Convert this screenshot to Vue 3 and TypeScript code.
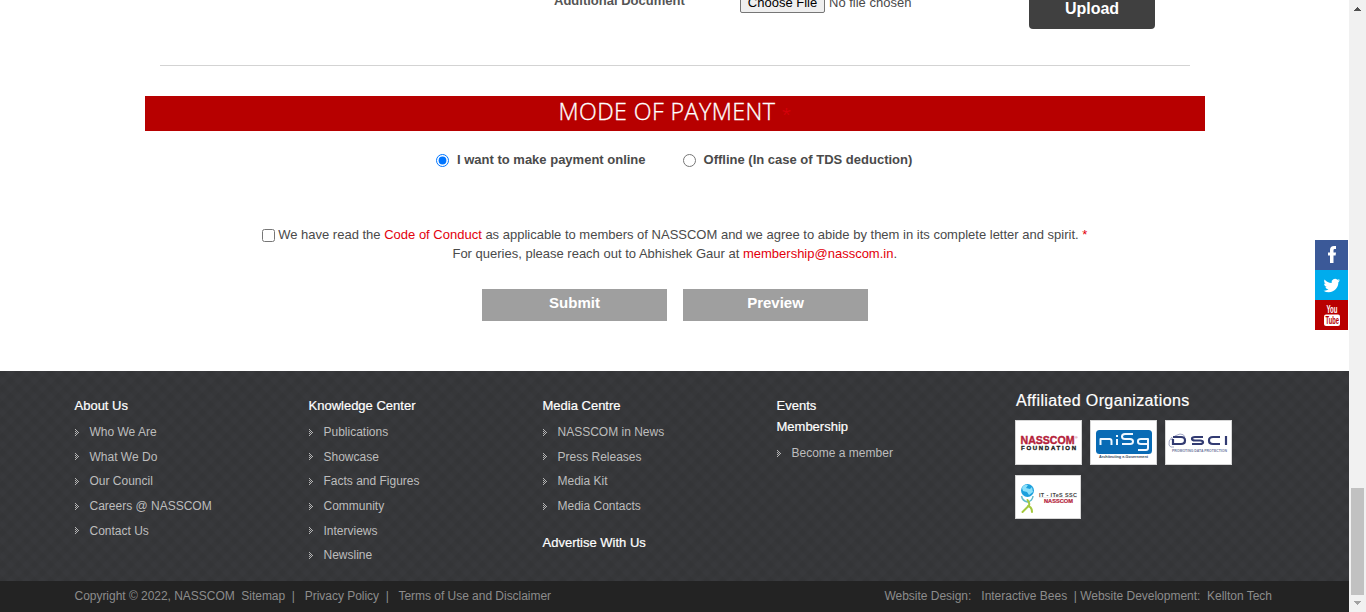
<script setup lang="ts">
import { ref } from 'vue'

interface LinkGroup { title: string; links: string[] }

const mode = ref<string>('online')
const agreed = ref<boolean>(false)

const columns: LinkGroup[][] = [
  [{ title: 'About Us', links: ['Who We Are', 'What We Do', 'Our Council', 'Careers @ NASSCOM', 'Contact Us'] }],
  [{ title: 'Knowledge Center', links: ['Publications', 'Showcase', 'Facts and Figures', 'Community', 'Interviews', 'Newsline'] }],
  [
    { title: 'Media Centre', links: ['NASSCOM in News', 'Press Releases', 'Media Kit', 'Media Contacts'] },
    { title: 'Advertise With Us', links: [] },
  ],
  [
    { title: 'Events', links: [] },
    { title: 'Membership', links: ['Become a member'] },
  ],
]
</script>

<template>
  <div class="window">
    <div class="page">
      <main>
        <div class="upload-row">
          <b class="doc-label">Additional Document</b>
          <div class="picker"><span class="choose">Choose File</span><span>No file chosen</span></div>
          <button class="upload">Upload</button>
        </div>
        <hr class="rule" />
        <h2 class="banner">MODE OF PAYMENT <span>*</span></h2>
        <div class="modes">
          <label><input v-model="mode" type="radio" value="online" /><span>I want to make payment online</span></label>
          <label><input v-model="mode" type="radio" value="offline" /><span>Offline (In case of TDS deduction)</span></label>
        </div>
        <div class="terms">
          <label class="agree">
            <input v-model="agreed" type="checkbox" />
            <span>We have read the <a>Code of Conduct</a> as applicable to members of NASSCOM and we agree to abide by them in its complete letter and spirit. <a>*</a></span>
          </label>
          <p>For queries, please reach out to Abhishek Gaur at <a>membership@nasscom.in</a>.</p>
        </div>
        <div class="actions"><button>Submit</button><button>Preview</button></div>
      </main>

      <footer>
        <div class="links">
          <div v-for="(col, i) in columns" :key="i" class="col">
            <section v-for="group in col" :key="group.title">
              <h4>{{ group.title }}</h4>
              <ul v-if="group.links.length">
                <li v-for="link in group.links" :key="link">
                  <svg width="5" height="7" viewBox="0 0 5 7" shape-rendering="crispEdges">
                    <path d="M0 0h1v1h-1zM1 1h1v1h-1zM0 2h1v1h-1zM2 2h1v1h-1zM1 3h1v1h-1zM3 3h1v1h-1zM0 4h1v1h-1zM2 4h1v1h-1zM1 5h1v1h-1zM0 6h1v1h-1z" fill="#b5b5b5" />
                  </svg>
                  <a>{{ link }}</a>
                </li>
              </ul>
            </section>
          </div>
          <div class="partners">
            <h3>Affiliated Organizations</h3>
            <div class="logos">
              <svg width="67" height="45" viewBox="0 0 67 45">
                <rect width="67" height="45" fill="#d6d6d6" /><rect x="1" y="1" width="65" height="43" fill="#fff" />
                <text x="5.5" y="24" class="bold" font-size="10.5" textLength="54" lengthAdjust="spacingAndGlyphs" fill="#b51f3b" stroke="#b51f3b" stroke-width=".4">NASSCOM</text>
                <text x="60" y="19" font-size="3.5" fill="#b51f3b">®</text>
                <text x="6" y="30" class="bold" font-size="6" textLength="55" fill="#222" stroke="#222" stroke-width=".35">FOUNDATION</text>
              </svg>
              <svg width="67" height="45" viewBox="0 0 67 45">
                <rect width="67" height="45" fill="#d6d6d6" /><rect x="1" y="1" width="65" height="43" fill="#fff" />
                <rect x="6" y="10" width="56" height="24" rx="3.5" fill="#086bb5" />
                <g fill="none" stroke="#eef7ff" stroke-width="2" stroke-linejoin="round">
                  <path d="M10.500 25v-6h9q2 0 2 2v4M27 19v6M27 15v2M43 14h-8q-3 0-3 2.500t3 2.500h5q3 0 3 2.500t-3 2.500h-8M58 19h-7q-3 0-3 2v1q0 2 3 2h7v-5v9q0 2-2 2h-8" />
                </g>
                <text x="9" y="38" class="bold" font-size="4" textLength="49" lengthAdjust="spacingAndGlyphs" fill="#34495e">Architecting e-Government</text>
              </svg>
              <svg width="67" height="45" viewBox="0 0 67 45">
                <rect width="67" height="45" fill="#d6d6d6" /><rect x="1" y="1" width="65" height="43" fill="#fff" />
                <g fill="none" stroke="#8a91b5" stroke-width=".8"><path d="M6 20q3-5 9-6 4 0 5 3M7 17q-4 4-3 8 1 3 5 2" /></g>
                <g fill="none" stroke="#323b72" stroke-width="2.2">
                  <path d="M8 17h8q4 0 4 3.500t-4 3.500H8v-5M38 17h-8q-3 0-3 1.700t3 1.800h5q3 0 3 1.700t-3 1.800h-8M55 17h-7q-4 0-4 3.500t4 3.500h7M61 16v9" />
                </g>
                <text x="7" y="31.5" class="bold" font-size="3" textLength="55" lengthAdjust="spacingAndGlyphs" fill="#70789e">PROMOTING DATA PROTECTION</text>
              </svg>
              <svg width="67" height="45" viewBox="0 0 67 45">
                <rect width="66" height="44" fill="#d6d6d6" /><rect x="1" y="1" width="64" height="42" fill="#fff" />
                <circle cx="12.5" cy="15.500" r="6.500" fill="#1ba0dd" />
                <path d="M7 13q2-4 6-3l-2 3 4 1 2-2 1 5-4 3-2-3-4-1z" fill="#8be0fa" />
                <path d="M6.500 21q1 5 6 6 5-1 5.500-6" fill="none" stroke="#63bccb" stroke-width="1.500" />
                <path d="M12.500 25q3 4 1 6t-6 6M13 31q4 1 4 6" fill="none" stroke="#a4c83d" stroke-width="2" stroke-linecap="round" />
                <path d="M24 22.500h38" stroke="#ddd" stroke-width=".5" />
                <text x="24" y="21.500" class="bold" font-size="5.500" textLength="38" fill="#444">IT - ITeS SSC</text>
                <text x="29" y="27.500" class="bold" font-size="5.200" textLength="29" lengthAdjust="spacingAndGlyphs" fill="#b51f3b" stroke="#b51f3b" stroke-width=".2">NASSCOM</text>
              </svg>
            </div>
          </div>
        </div>
        <div class="legal">
          <span>Copyright © 2022, NASSCOM&nbsp; Sitemap&nbsp; |&nbsp;&nbsp; Privacy Policy&nbsp; |&nbsp;&nbsp; Terms of Use and Disclaimer</span>
          <span class="credits">Website Design:&nbsp;&nbsp; Interactive Bees&nbsp; | Website Development:&nbsp; Kellton Tech</span>
        </div>
      </footer>
    </div>

    <div class="social">
      <svg width="33" height="30" viewBox="0 0 33 30"><rect width="33" height="30" fill="#3b5998" /><path d="M15 23v-7.500H13v-3h2v-2.500q0-4 4-4h2v3h-1.300q-1.200 0-1.200 1.300v2.200h2.500l-.4 3h-2.100v7.500z" fill="#fff" /></svg>
      <svg width="33" height="30" viewBox="0 0 33 30"><rect width="33" height="30" fill="#00aced" /><path transform="translate(8.500 7.200) scale(.69)" fill="#fff" d="M23.950 4.570a10 10 0 0 1-2.820.77 4.960 4.960 0 0 0 2.160-2.720c-.95.550-2.010.960-3.130 1.180a4.920 4.920 0 0 0-8.380 4.480C7.690 8.090 4.070 6.130 1.640 3.160a4.820 4.820 0 0 0-.67 2.480c0 1.710.87 3.210 2.190 4.100a4.900 4.900 0 0 1-2.230-.62v.06a4.920 4.920 0 0 0 3.950 4.830 5 5 0 0 1-2.210.08 4.940 4.940 0 0 0 4.600 3.420A9.870 9.870 0 0 1 0 19.540a13.990 13.990 0 0 0 7.550 2.210c9.050 0 14-7.500 14-13.980 0-.21 0-.42-.02-.63a9.940 9.940 0 0 0 2.420-2.570z" /></svg>
      <svg width="33" height="30" viewBox="0 0 33 30"><rect width="33" height="30" fill="#b90000" />
        <text x="11.500" y="13" class="bold" font-size="10.500" textLength="11" lengthAdjust="spacingAndGlyphs" fill="#fff">You</text>
        <rect x="9" y="14.500" width="16" height="11.500" rx="2" fill="#fff" />
        <text x="10.500" y="24" class="bold" font-size="10.500" textLength="13.500" lengthAdjust="spacingAndGlyphs" fill="#b90000">Tube</text>
      </svg>
    </div>

    <div class="scrollbar">
      <svg width="17" height="17" shape-rendering="crispEdges"><path d="M8 7h1v1h1v1h1v1h1v1H5v-1h1V9h1V8h1z" fill="#505050" /></svg>
      <i class="thumb"></i>
      <svg width="17" height="17" shape-rendering="crispEdges"><path d="M5 6h7v1h-1v1h-1v1H9v1H8V9H7V8H6V7H5z" fill="#a3a3a3" /></svg>
    </div>
  </div>
</template>

<style>
body { overflow: hidden; background: #fff; }
</style>

<style scoped>
* { box-sizing: border-box; }
.window { display: flex; height: 612px; overflow: hidden; position: relative; font: 13px/19px "Liberation Sans", Arial, sans-serif; color: #4a4a4a; }
.page { width: 1349px; flex: none; }
main { height: 371px; padding: 0 144px 0 145px; overflow: hidden; }
a { color: #e3000b; }
h2, h3, h4, p, ul { margin: 0; padding: 0; font-weight: normal; }
button { border: 0; padding: 0; font: bold 15px/18px "Liberation Sans", Arial, sans-serif; color: #fff; }

.upload-row { display: flex; height: 65px; padding-left: 409px; align-items: flex-start; }
.doc-label { width: 186px; margin-top: -9px; color: #555; }
.picker { width: 289px; display: flex; gap: 4px; margin-top: -8px; line-height: 21px; }
.choose { width: 85px; height: 21px; border: 1px solid #767676; border-radius: 2px; background: #efefef; color: #000; text-align: center; font-size: 13px; line-height: 20px; }
.upload { width: 126px; height: 39px; margin-top: -10px; border-radius: 4px; background: #404040; font-size: 16px; padding-bottom: 2px; }
.rule { margin: 0 15px 30px; border: 0; height: 1px; background: #d3d3d3; }
.banner { width: 1060px; height: 35px; background: #b70000; color: #fff; text-align: center; font: 300 23.3px/30px "Open Sans", sans-serif; letter-spacing: .4px; -webkit-text-stroke: .3px #fff; }
.banner span { color: #d9000c; font-size: 17px; line-height: 20px; -webkit-text-stroke: .2px #d9000c; }
.modes { display: flex; margin: 19px 0 0 291px; gap: 37px; font-weight: bold; }
.modes label { display: flex; }
.modes input { margin: 4px 8px 0 0; width: 13px; height: 13px; }
.terms { width: 1059.5px; margin-top: 56px; text-align: center; }
.agree { display: flex; justify-content: center; }
.agree input { margin: 4px 3px 0 0; width: 13px; height: 13px; }
.actions { display: flex; gap: 16px; margin: 26px 0 0 337px; }
.actions button { width: 185px; height: 32px; background: #9f9f9f; padding-bottom: 4px; }

footer {
  height: 241px;
  background-color: #38393c;
  background-image:
    repeating-linear-gradient(45deg, rgba(0,0,0,.045) 0 3px, transparent 5px 8px, rgba(0,0,0,.045) 11.314px),
    repeating-linear-gradient(-45deg, rgba(0,0,0,.045) 0 3px, transparent 5px 8px, rgba(0,0,0,.045) 11.314px);
}
.links { display: flex; height: 210px; padding-left: 74.5px; }
.col { width: 234px; padding-top: 24px; }
.col h4 { font-size: 13px; line-height: 21px; color: #fff; -webkit-text-stroke: .2px #fff; }
.col ul { list-style: none; margin-top: 4.5px; }
section:has(ul) + section { margin-top: 13px; }
section + section ul { margin-top: 5px; }
li { display: flex; align-items: center; gap: 10px; height: 24.6px; font-size: 12px; }
li svg { position: relative; top: -.5px; }
li a { color: #bdbdbd; }
.partners { margin-left: 4.5px; width: 240px; padding-top: 19px; }
.partners h3 { font-size: 16px; line-height: 22px; color: #fff; padding-left: 1px; letter-spacing: .39px; -webkit-text-stroke: .2px #fff; }
.logos { display: flex; flex-wrap: wrap; gap: 9.5px 8px; margin: 8px 0 0; }
.logos svg { display: block; }
.legal { height: 31px; background: #232323; color: #8c8c8c; font-size: 12px; line-height: 30px; padding: 0 77px 0 74.5px; display: flex; justify-content: space-between; letter-spacing: -.028px; }
.credits { letter-spacing: -.015px; }
.bold { font-weight: bold; }

.social { position: absolute; left: 1315px; top: 240px; display: grid; }
.social svg { display: block; }
.scrollbar { width: 17px; height: 612px; background: #f1f1f1; display: flex; flex-direction: column; }
.scrollbar svg { display: block; }
.thumb { margin: auto 2px 0; height: 107px; background: #c1c1c1; }
</style>
